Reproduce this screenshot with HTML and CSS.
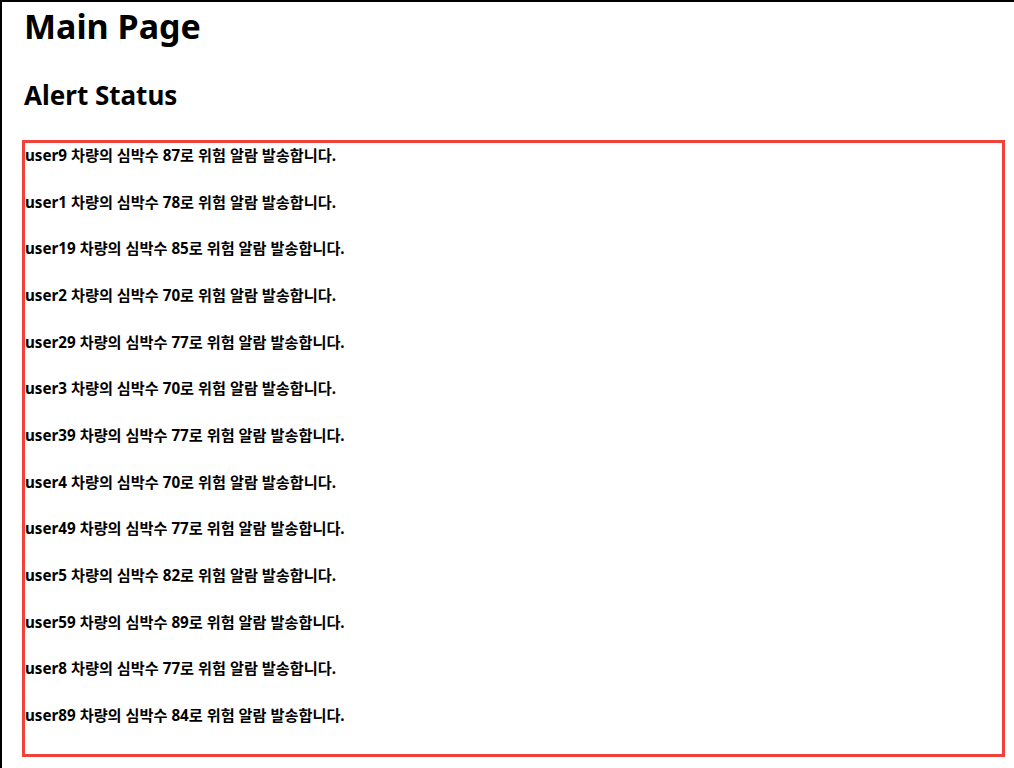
FILE: index.html
```html
<!DOCTYPE html>
<html lang="ko">
<head>
<meta charset="utf-8">
<title>Main Page</title>
<link rel="stylesheet" href="styles.css">
</head>
<body>
<div class="page">
  <h1 class="title">Main Page</h1>
  <h2 class="subtitle">Alert Status</h2>
  <div class="alerts">
    <p class="alert">user9 차량의 심박수 87로 위험 알람 발송합니다.</p>
    <p class="alert">user1 차량의 심박수 78로 위험 알람 발송합니다.</p>
    <p class="alert">user19 차량의 심박수 85로 위험 알람 발송합니다.</p>
    <p class="alert">user2 차량의 심박수 70로 위험 알람 발송합니다.</p>
    <p class="alert">user29 차량의 심박수 77로 위험 알람 발송합니다.</p>
    <p class="alert">user3 차량의 심박수 70로 위험 알람 발송합니다.</p>
    <p class="alert">user39 차량의 심박수 77로 위험 알람 발송합니다.</p>
    <p class="alert">user4 차량의 심박수 70로 위험 알람 발송합니다.</p>
    <p class="alert">user49 차량의 심박수 77로 위험 알람 발송합니다.</p>
    <p class="alert">user5 차량의 심박수 82로 위험 알람 발송합니다.</p>
    <p class="alert">user59 차량의 심박수 89로 위험 알람 발송합니다.</p>
    <p class="alert">user8 차량의 심박수 77로 위험 알람 발송합니다.</p>
    <p class="alert">user89 차량의 심박수 84로 위험 알람 발송합니다.</p>
  </div>
</div>
</body>
</html>
```
FILE: styles.css
```css
html, body {
  margin: 0;
  padding: 0;
  background: #fff;
}
body {
  font-family: "Noto Sans", "Noto Sans CJK KR", sans-serif;
  color: #000;
}
.page {
  box-sizing: border-box;
  height: 768px;
  border-top: 2px solid #000;
  border-left: 2px solid #000;
  padding: 0 9px 0 20px;
  display: flex;
  flex-direction: column;
}
.title {
  margin: 0;
  font-size: 34px;
  font-weight: 700;
  line-height: 48px;
  padding-left: 2px;
}
.subtitle {
  margin: 25px 0 0;
  font-size: 26px;
  font-weight: 700;
  line-height: 40px;
  padding-left: 2px;
}
.alerts {
  margin-top: 25px;
  border: 3px solid #f0413a;
  padding: 2px 0 29px;
  display: flex;
  flex-direction: column;
  gap: 26.67px;
}
.alert {
  margin: 0;
  font-size: 15.2px;
  font-weight: 700;
  line-height: 20px;
}
```
